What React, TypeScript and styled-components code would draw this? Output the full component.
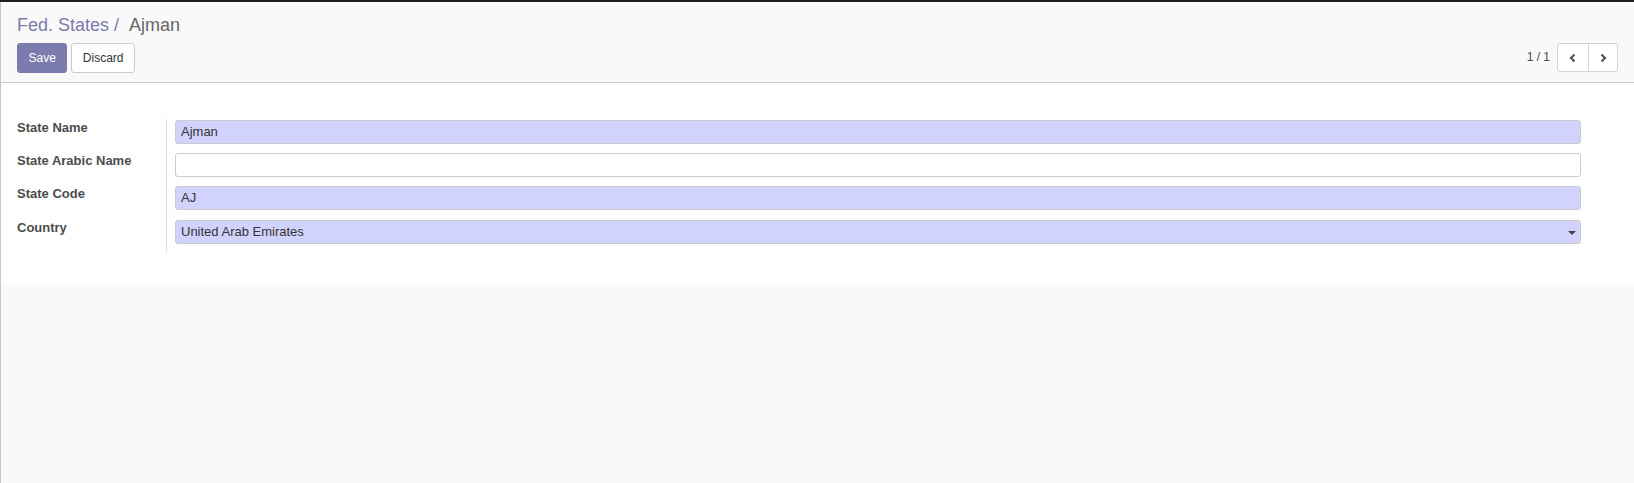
import React from "react";
import styled, { createGlobalStyle } from "styled-components";

const Global = createGlobalStyle`
  html, body { margin: 0; padding: 0; background: #f9f9f9; overflow: hidden; }
  body { font-family: "Liberation Sans", Arial, Helvetica, sans-serif; font-size: 13px; line-height: 1.42857; color: #4c4c4c; }
  * { box-sizing: border-box; }
`;

const TopEdge = styled.div`
  height: 2px;
  background: #1e1e1e;
`;

const Main = styled.div`
  height: calc(100vh - 2px);
  border-left: 1px solid #c8c8c8;
  background: #f9f9f9;
  display: flex;
  flex-direction: column;
`;

const ControlPanel = styled.div`
  background: #f9f9f9;
  border-bottom: 1px solid #cacaca;
  padding: 11px 16px 9px 16px;
  display: flex;
  flex-direction: column;
  gap: 4px;
`;

const Breadcrumb = styled.div`
  font-size: 18px;
  line-height: 25.7px;
  display: flex;
  align-items: baseline;
`;

const Crumb = styled.span`
  color: #7c7bad;
`;

const Sep = styled.span`
  color: #7c7bad;
  padding: 0 10px 0 5px;
`;

const Active = styled.span`
  color: #666;
`;

const ToolRow = styled.div`
  display: flex;
  justify-content: space-between;
  align-items: center;
  height: 30px;
`;

const Buttons = styled.div`
  display: flex;
  gap: 4px;
`;

const Button = styled.button<{ $primary?: boolean }>`
  height: 30px;
  padding: 0 10.5px;
  font-family: inherit;
  font-size: 12px;
  line-height: 18px;
  border-radius: 3px;
  border: 1px solid ${(p) => (p.$primary ? "#7c7bad" : "#cccccc")};
  background: ${(p) => (p.$primary ? "#7c7bad" : "#ffffff")};
  color: ${(p) => (p.$primary ? "#ffffff" : "#333333")};
  cursor: pointer;
`;

const Pager = styled.div`
  display: flex;
  align-items: center;
  gap: 7px;
`;

const PagerValue = styled.span`
  font-size: 12px;
  color: #4c4c4c;
`;

const PagerGroup = styled.div`
  display: flex;
  border: 1px solid #d4d4d4;
  border-radius: 3px;
  background: #fff;
  height: 29px;
`;

const PagerBtn = styled.button`
  width: 29.5px;
  height: 27px;
  border: none;
  background: transparent;
  display: flex;
  align-items: center;
  justify-content: center;
  padding: 0;
  & + & { border-left: 1px solid #d4d4d4; }
`;

const Sheet = styled.div`
  background: #ffffff;
  padding: 36px 53px 33px 16px;
`;

const Group = styled.div`
  display: grid;
  grid-template-columns: 150px 1fr;
`;

const Label = styled.div`
  font-weight: bold;
  font-size: 13px;
  color: #4c4c4c;
  border-right: 1px solid #dcdcdc;
  height: 33.33px;
  line-height: 18.57px;
`;

const FieldCell = styled.div`
  padding: 1px 0 0 8px;
  height: 33.33px;
`;

const Input = styled.div<{ $required?: boolean }>`
  position: relative;
  height: 24px;
  border: 1px solid #cccccc;
  border-radius: 3px;
  background: ${(p) => (p.$required ? "#d2d2ff" : "#ffffff")};
  padding: 0 5px;
  font-size: 13px;
  line-height: 22px;
  color: #333;
`;

const Caret = styled.span`
  position: absolute;
  right: 4px;
  top: 10px;
  width: 0;
  height: 0;
  border-left: 4px solid transparent;
  border-right: 4px solid transparent;
  border-top: 4px solid #444;
`;

const Chevron = ({ dir }: { dir: "left" | "right" }) => (
  <svg width="10" height="10" viewBox="0 0 10 10">
    <polyline
      points={dir === "left" ? "6.5,1.5 3,5 6.5,8.5" : "3.5,1.5 7,5 3.5,8.5"}
      fill="none"
      stroke="#555"
      strokeWidth="2.2"
      strokeLinecap="butt"
      strokeLinejoin="miter"
    />
  </svg>
);

const fields: { label: string; value: string; required: boolean; select?: boolean }[] = [
  { label: "State Name", value: "Ajman", required: true },
  { label: "State Arabic Name", value: "", required: false },
  { label: "State Code", value: "AJ", required: true },
  { label: "Country", value: "United Arab Emirates", required: true, select: true },
];

export default function App() {
  return (
    <>
      <Global />
      <TopEdge />
      <Main>
        <ControlPanel>
          <Breadcrumb>
            <Crumb>Fed. States</Crumb>
            <Sep>/</Sep>
            <Active>Ajman</Active>
          </Breadcrumb>
          <ToolRow>
            <Buttons>
              <Button $primary>Save</Button>
              <Button>Discard</Button>
            </Buttons>
            <Pager>
              <PagerValue>1 / 1</PagerValue>
              <PagerGroup>
                <PagerBtn aria-label="Previous">
                  <Chevron dir="left" />
                </PagerBtn>
                <PagerBtn aria-label="Next">
                  <Chevron dir="right" />
                </PagerBtn>
              </PagerGroup>
            </Pager>
          </ToolRow>
        </ControlPanel>
        <Sheet>
          <Group>
            {fields.map((f) => (
              <React.Fragment key={f.label}>
                <Label>{f.label}</Label>
                <FieldCell>
                  <Input $required={f.required}>
                    {f.value}
                    {f.select && <Caret />}
                  </Input>
                </FieldCell>
              </React.Fragment>
            ))}
          </Group>
        </Sheet>
      </Main>
    </>
  );
}
